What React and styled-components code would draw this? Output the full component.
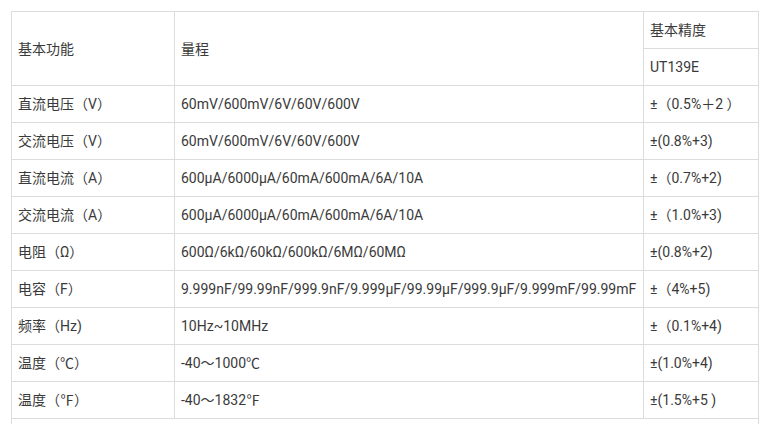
import React from "react";
import styled, { createGlobalStyle } from "styled-components";

const Global = createGlobalStyle`
  html, body { margin: 0; padding: 0; background: #fff; }
  body { font-family: Roboto, "Noto Sans CJK SC", sans-serif; }
`;

const Page = styled.div`
  padding: 11px 0 0 11px;
`;

const Table = styled.table`
  border-collapse: collapse;
  table-layout: fixed;
  width: 747px;
  color: #3a3a3a;
  font-size: 14px;
`;

const Cell = styled.td`
  border: 1px solid #dcdcdc;
  height: 37px;
  padding: 0 0 0 6px;
  box-sizing: border-box;
  vertical-align: middle;
  white-space: nowrap;
  overflow: hidden;
  line-height: 18px;
`;

const rows = [
  ["直流电压（V）", "60mV/600mV/6V/60V/600V", "±（0.5%＋2 ）"],
  ["交流电压（V）", "60mV/600mV/6V/60V/600V", "±(0.8%+3)"],
  ["直流电流（A）", "600μA/6000μA/60mA/600mA/6A/10A", "±（0.7%+2)"],
  ["交流电流（A）", "600μA/6000μA/60mA/600mA/6A/10A", "±（1.0%+3)"],
  ["电阻（Ω）", "600Ω/6kΩ/60kΩ/600kΩ/6MΩ/60MΩ", "±(0.8%+2)"],
  ["电容（F）", "9.999nF/99.99nF/999.9nF/9.999μF/99.99μF/999.9μF/9.999mF/99.99mF", "±（4%+5)"],
  ["频率（Hz)", "10Hz~10MHz", "±（0.1%+4)"],
  ["温度（℃）", "-40～1000℃", "±(1.0%+4)"],
  ["温度（℉）", "-40～1832℉", "±(1.5%+5 )"],
];

export default function App() {
  return (
    <Page>
      <Global />
      <Table>
        <colgroup>
          <col style={{ width: 163 }} />
          <col style={{ width: 469 }} />
          <col style={{ width: 115 }} />
        </colgroup>
        <tbody>
          <tr>
            <Cell rowSpan={2}>基本功能</Cell>
            <Cell rowSpan={2}>量程</Cell>
            <Cell>基本精度</Cell>
          </tr>
          <tr>
            <Cell>UT139E</Cell>
          </tr>
          {rows.map((r, i) => (
            <tr key={i}>
              <Cell>{r[0]}</Cell>
              <Cell>{r[1]}</Cell>
              <Cell>{r[2]}</Cell>
            </tr>
          ))}
          <tr>
            <Cell colSpan={3}>&nbsp;</Cell>
          </tr>
        </tbody>
      </Table>
    </Page>
  );
}
